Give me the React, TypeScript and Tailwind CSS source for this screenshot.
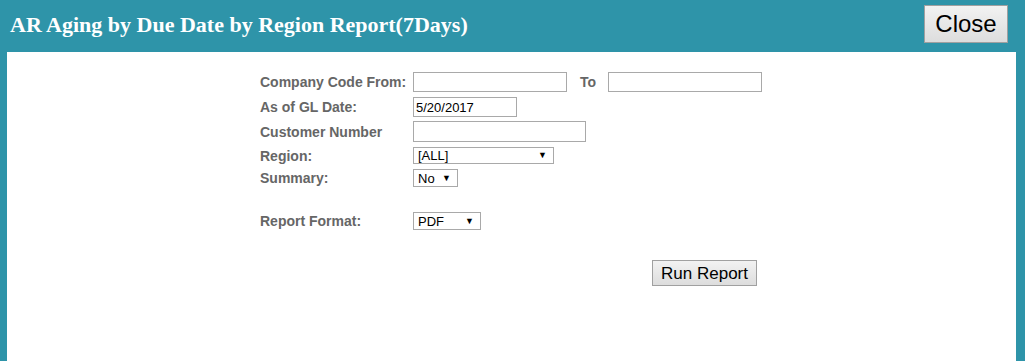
import React from 'react';

const labelCls = "w-[153px] shrink-0 text-[14px] font-bold text-[#666] leading-none";
const inputCls = "h-full border border-[#a9a9a9] bg-white px-[2px] text-[13px] text-black outline-none font-['Liberation_Sans',Arial,sans-serif]";

const FakeSelect: React.FC<{ value: string; width: string }> = ({ value, width }) => (
    <div className={`${width} h-full border border-[#a9a9a9] bg-white flex items-center justify-between pl-[4px] pr-[6px] text-[13px] text-black leading-none`}>
        <span>{value}</span>
        <span className="text-[9px]">▼</span>
    </div>
);

const App: React.FC = () => {
    return (
        <div className="w-[1025px] h-[361px] bg-[#2e94a9] flex flex-col overflow-hidden font-['Liberation_Sans',Arial,sans-serif]">
            {/* Header */}
            <header className="h-[52px] flex items-start justify-between pl-[10px] pr-[17px] shrink-0">
                <h1 className="mt-[12px] text-[22px] font-bold text-white font-['Liberation_Serif','Times_New_Roman',serif] leading-[25px]">
                    AR Aging by Due Date by Region Report(7Days)
                </h1>
                <button className="mt-[5px] w-[84px] h-[38px] border border-[#a0a0a0] bg-gradient-to-b from-[#f2f2f2] to-[#dddddd] text-[24px] text-black leading-none">
                    Close
                </button>
            </header>

            {/* Body */}
            <main className="flex-1 bg-white ml-[7px] mr-[9px] pl-[253px] pt-[20px]">
                <div className="flex flex-col">
                    <div className="flex items-center h-[20px]">
                        <span className={labelCls}>Company Code From:</span>
                        <input className={`${inputCls} w-[154px]`} />
                        <span className="ml-[13px] w-[28px] text-[14px] font-bold text-[#666] leading-none">To</span>
                        <input className={`${inputCls} w-[154px]`} />
                    </div>
                    <div className="flex items-center h-[20px] mt-[5px]">
                        <span className={labelCls}>As of GL Date:</span>
                        <input className={`${inputCls} w-[104px] text-[12px]`} defaultValue="5/20/2017" />
                    </div>
                    <div className="flex items-center h-[21px] mt-[4px]">
                        <span className={labelCls}>Customer Number</span>
                        <input className={`${inputCls} w-[173px]`} />
                    </div>
                    <div className="flex items-center h-[17px] mt-[5px]">
                        <span className={labelCls}>Region:</span>
                        <FakeSelect value="[ALL]" width="w-[141px]" />
                    </div>
                    <div className="flex items-center h-[18px] mt-[5px]">
                        <span className={labelCls}>Summary:</span>
                        <FakeSelect value="No" width="w-[45px]" />
                    </div>
                    <div className="flex items-center h-[18px] mt-[25px]">
                        <span className={labelCls}>Report Format:</span>
                        <FakeSelect value="PDF" width="w-[68px]" />
                    </div>
                    <div className="flex mt-[30px] pl-[392px]">
                        <button className="w-[105px] h-[26px] border border-[#a0a0a0] bg-gradient-to-b from-[#f2f2f2] to-[#dddddd] text-[17px] text-black leading-none">
                            Run Report
                        </button>
                    </div>
                </div>
            </main>
        </div>
    );
};

export default App;
